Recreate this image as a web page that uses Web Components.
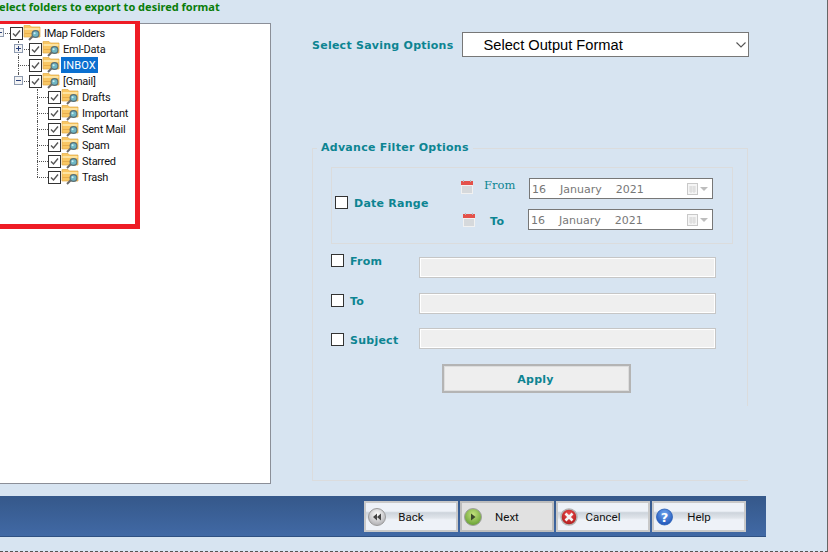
<!DOCTYPE html>
<html>
<head>
<meta charset="utf-8">
<title>Export wizard</title>
<style>
  html, body { margin: 0; padding: 0; background: #d7e4f1; }
</style>
</head>
<body>
<wiz-app></wiz-app>

<script>
const TEAL = "#0d8492";
const UI_FONT = "Roboto, 'Liberation Sans', sans-serif";
const BOLD_FONT = "'DejaVu Sans', Verdana, sans-serif";

class CheckBox extends HTMLElement {
  constructor() {
    super();
    this.attachShadow({ mode: "open" });
    let mark = this.hasAttribute("checked")
      ? '<path d="M3 6.5 L5.5 9 L10 3.5" fill="none" stroke="#555" stroke-width="1.4"/>'
      : "";
    this.shadowRoot.innerHTML = `
      <style>
        :host { display: block; width: 13px; height: 13px; flex: none; }
        svg { display: block; }
      </style>
      <svg width="13" height="13" viewBox="0 0 13 13">
        <rect x="0.5" y="0.5" width="12" height="12" fill="#fff" stroke="#333"/>
        ${mark}
      </svg>`;
  }
}
customElements.define("check-box", CheckBox);

class FolderIcon extends HTMLElement {
  constructor() {
    super();
    this.attachShadow({ mode: "open" });
    this.shadowRoot.innerHTML = `
      <style>
        :host { display: block; width: 18px; height: 16px; flex: none; }
        svg { display: block; }
      </style>
      <svg width="18" height="16" viewBox="0 0 18 16">
        <path d="M1 1.5 L1 0.5 L7 0.5 L8.5 2 L17 2 L17 12 L1 12 Z" fill="#f9c763" stroke="#e0ab48" stroke-width="0.7"/>
        <rect x="1.5" y="3" width="15" height="2" fill="#fde3a0"/>
        <rect x="1.5" y="8" width="8" height="1" fill="#e8ad4c"/>
        <path d="M10 11 L6 15" stroke="#6b6b6b" stroke-width="2"/>
        <circle cx="12.5" cy="9" r="3.4" fill="#6fb7c4" stroke="#5a7078" stroke-width="1.2"/>
        <circle cx="11.6" cy="8.2" r="1" fill="#cfeef2"/>
      </svg>`;
  }
}
customElements.define("folder-icon", FolderIcon);

class TreeNode extends HTMLElement {
  constructor() {
    super();
    this.attachShadow({ mode: "open" });
    let depth = Number(this.getAttribute("depth") || 0);
    let left = 10 + 19 * depth;
    let expander = this.getAttribute("expander");
    let sign = "";
    if (expander) {
      sign = `<span class="box"><i class="h"></i>${expander === "plus" ? '<i class="v"></i>' : ""}</span>`;
    }
    this.shadowRoot.innerHTML = `
      <style>
        :host { display: flex; height: 16px; align-items: center; position: relative; font: 11px ${UI_FONT}; letter-spacing: -0.25px; color: #111; }
        .gutter { width: ${left}px; height: 16px; flex: none; position: relative; }
        .hline { position: absolute; left: ${left - 11}px; width: 11px; top: 8px; border-top: 1px dotted #555; }
        .vline { position: absolute; left: ${left - 11}px; top: 0; height: ${this.hasAttribute("last") ? 8 : 16}px; border-left: 1px dotted #555; }
        .box { position: absolute; left: ${left - 15}px; top: 3px; width: 7px; height: 7px; padding: 0; border: 1px solid #8e9bb0; background: #f4f4f4; }
        .box i { position: absolute; background: #29407a; }
        .h { left: 1px; top: 3px; width: 5px; height: 1px; }
        .v { left: 3px; top: 1px; width: 1px; height: 5px; }
        .label { margin-left: 1px; padding: 0 2px; height: 16px; line-height: 17px; white-space: nowrap; }
        :host([selected]) .label { background: #0a6fd0; color: #fff; letter-spacing: 0.15px; }
      </style>
      <span class="gutter"><span class="vline"></span><span class="hline"></span>${sign}</span>
      <check-box checked></check-box>
      <folder-icon></folder-icon>
      <span class="label"><slot></slot></span>`;
  }
}
customElements.define("tree-node", TreeNode);

class TreePanel extends HTMLElement {
  constructor() {
    super();
    this.attachShadow({ mode: "open" });
    this.shadowRoot.innerHTML = `
      <style>
        :host { display: block; position: relative; height: 461px; box-sizing: border-box; background: #fff; border: 1px solid #8b8f98; border-left: none; padding-top: 1px; }
        .mark { position: absolute; left: -2px; top: -3px; width: 137px; height: 200px; border: solid #ee1c25; border-width: 3px 5px 5px 0; }
      </style>
      <slot></slot>
      <div class="mark"></div>`;
  }
}
customElements.define("tree-panel", TreePanel);

class OutputSelect extends HTMLElement {
  constructor() {
    super();
    this.attachShadow({ mode: "open" });
    this.shadowRoot.innerHTML = `
      <style>
        :host { display: flex; align-items: center; width: 287px; height: 25px; box-sizing: border-box; background: #fff; border: 1px solid #777; padding-left: 20px; font: 14.67px 'Liberation Sans', Arial, sans-serif; letter-spacing: 0; color: #000; }
        span { flex: 1; }
        svg { margin-right: 2px; }
      </style>
      <span><slot></slot></span>
      <svg width="10" height="6" viewBox="0 0 10 6"><path d="M0.5 0.5 L5 5 L9.5 0.5" fill="none" stroke="#555" stroke-width="1.1"/></svg>`;
  }
}
customElements.define("output-select", OutputSelect);

class CalendarIcon extends HTMLElement {
  constructor() {
    super();
    this.attachShadow({ mode: "open" });
    this.shadowRoot.innerHTML = `
      <style>
        :host { display: block; width: 12px; height: 14px; flex: none; }
        svg { display: block; }
      </style>
      <svg width="12" height="14" viewBox="0 0 12 14">
        <rect x="0" y="1" width="12" height="13" fill="#f1f1f1"/>
        <rect x="0" y="1" width="12" height="4" fill="#e4514a"/>
        <rect x="1" y="6" width="10" height="7" fill="#d6d9dc"/>
        <rect x="2" y="0" width="1" height="2" fill="#b9b9b9"/>
        <rect x="9" y="0" width="1" height="2" fill="#b9b9b9"/>
      </svg>`;
  }
}
customElements.define("calendar-icon", CalendarIcon);

class DatePicker extends HTMLElement {
  constructor() {
    super();
    this.attachShadow({ mode: "open" });
    this.shadowRoot.innerHTML = `
      <style>
        :host { display: flex; align-items: center; flex: 1; height: 21px; box-sizing: border-box; background: #fff; border: 1px solid #777; padding-left: 2px; font: 11px ${BOLD_FONT}; color: #777; }
        span { flex: 1; padding-top: 2px; word-spacing: 10.5px; white-space: nowrap; }
        svg { margin-right: 4px; }
      </style>
      <span><slot></slot></span>
      <svg width="21" height="12" viewBox="0 0 21 12">
        <rect x="0.5" y="0.5" width="10" height="11" fill="#f5f5f5" stroke="#c9c9c9"/>
        <path d="M2 4 H9 M2 6 H9 M2 8 H9 M4 3 V10 M7 3 V10" stroke="#d9d9d9" stroke-width="1"/>
        <path d="M13 4 H21 L17 8 Z" fill="#bdbdbd"/>
      </svg>`;
  }
}
customElements.define("date-picker", DatePicker);

class DateRow extends HTMLElement {
  constructor() {
    super();
    this.attachShadow({ mode: "open" });
    this.shadowRoot.innerHTML = `
      <style>
        :host { display: flex; align-items: center; height: 21px; color: ${TEAL}; }
        calendar-icon { margin-bottom: var(--icon-lift, 0); }
        .label { flex: none; white-space: nowrap; margin-bottom: var(--label-lift, 0); }
      </style>
      <calendar-icon></calendar-icon>
      <span class="label"><slot name="label"></slot></span>
      <slot></slot>`;
  }
}
customElements.define("date-row", DateRow);

class FilterRow extends HTMLElement {
  constructor() {
    super();
    this.attachShadow({ mode: "open" });
    this.shadowRoot.innerHTML = `
      <style>
        :host { display: grid; grid-template-columns: 13px 75px 297px; height: 21px; font: bold 11px ${BOLD_FONT}; letter-spacing: 0.25px; color: ${TEAL}; }
        check-box { margin-top: var(--shift); }
        .label { margin-top: var(--shift); margin-left: 6px; line-height: 15px; white-space: nowrap; }
        .input { box-sizing: border-box; height: 21px; background: #efefef; border: 1px solid #c6c6c6; box-shadow: inset 0 0 0 1px #fff; }
      </style>
      <check-box></check-box>
      <span class="label"><slot></slot></span>
      <div class="input"></div>`;
  }
}
customElements.define("filter-row", FilterRow);

class FilterPanel extends HTMLElement {
  constructor() {
    super();
    this.attachShadow({ mode: "open" });
    this.shadowRoot.innerHTML = `
      <style>
        :host { display: block; position: relative; width: 436px; height: 333px; box-sizing: border-box; border: 1px solid #dbdcdd; border-right: none; border-top: none; }
        .top { position: absolute; left: 0; right: 0; top: 0; border-top: 1px solid #dbdcdd; }
        .edge { position: absolute; right: 0; top: 0; height: 258px; border-right: 1px solid #dbdcdd; }
        .title { position: absolute; left: 4px; top: -7px; padding: 0 4px; height: 14px; background: #d7e4f1; font: bold 11px/14px ${BOLD_FONT}; letter-spacing: 0.27px; color: ${TEAL}; white-space: nowrap; }
        .body { padding: 19px 0 0 18px; }
        .group { display: flex; width: 402px; height: 77px; box-sizing: border-box; border: 1px solid #dbdcdd; }
        .range { width: 129px; flex: none; display: flex; align-items: flex-start; padding: 28px 0 0 3px; box-sizing: border-box; font: bold 11px/15px ${BOLD_FONT}; letter-spacing: 0.25px; color: ${TEAL}; }
        .range span { margin-left: 6px; white-space: nowrap; }
        .pickers { width: 252px; padding-top: 10px; display: flex; flex-direction: column; gap: 10px; }
        .from-label { display: inline-block; font: 11.5px 'DejaVu Serif', serif; margin: 0 14px 0 11px; width: 31px; }
        .to-label { display: inline-block; font: bold 11px ${BOLD_FONT}; letter-spacing: 0.4px; margin: 0 22px 0 15px; width: 16px; }
        .rows { margin-top: 13px; }
        .apply { margin: 15px 0 0 111px; }
        .shift { margin-left: 2px; }
      </style>
      <div class="top"></div>
      <div class="edge"></div>
      <div class="title">Advance Filter Options</div>
      <div class="body">
        <div class="group">
          <div class="range"><check-box></check-box><span>Date Range</span></div>
          <div class="pickers">
            <date-row style="--icon-lift:4px;--label-lift:10px">
              <span slot="label" class="from-label">From</span>
              <date-picker>16 January 2021</date-picker>
            </date-row>
            <date-row class="shift">
              <span slot="label" class="to-label">To</span>
              <date-picker>16 January 2021</date-picker>
            </date-row>
          </div>
        </div>
        <div class="rows">
          <filter-row style="--shift:-3px;margin-bottom:15px">From</filter-row>
          <filter-row style="--shift:1px;margin-bottom:14px">To</filter-row>
          <filter-row style="--shift:5px">Subject</filter-row>
        </div>
        <apply-button class="apply">Apply</apply-button>
      </div>`;
  }
}

class ApplyButton extends HTMLElement {
  constructor() {
    super();
    this.attachShadow({ mode: "open" });
    this.shadowRoot.innerHTML = `
      <style>
        :host { display: block; width: 189px; height: 29px; box-sizing: border-box; padding-right: 2px; background: #eee; border: 2px solid #b4b4b4; box-shadow: inset 0 0 0 1px #ddd; text-align: center; font: bold 11px/27px ${BOLD_FONT}; letter-spacing: 0.25px; color: ${TEAL}; }
      </style>
      <slot></slot>`;
  }
}
customElements.define("apply-button", ApplyButton);
customElements.define("filter-panel", FilterPanel);

const NAV_ICONS = {
  back: `<defs><radialGradient id="b" cx="50%" cy="35%" r="70%"><stop offset="0" stop-color="#fff"/><stop offset="1" stop-color="#a9a9ad"/></radialGradient></defs>
    <circle cx="9" cy="9" r="8.5" fill="url(#b)" stroke="#9a9a9a"/>
    <path d="M9 5.5 L5 9 L9 12.5 Z M13 5.5 L9 9 L13 12.5 Z" fill="#444"/>`,
  next: `<defs><radialGradient id="n" cx="50%" cy="35%" r="70%"><stop offset="0" stop-color="#c5e37f"/><stop offset="1" stop-color="#5f9a2c"/></radialGradient></defs>
    <circle cx="9" cy="9" r="8.5" fill="url(#n)" stroke="#a0a0a0"/>
    <path d="M7 5.5 L11.5 9 L7 12.5 Z" fill="#3d4a2c"/>`,
  cancel: `<defs><radialGradient id="c" cx="50%" cy="35%" r="70%"><stop offset="0" stop-color="#ee4a4a"/><stop offset="1" stop-color="#a81818"/></radialGradient></defs>
    <circle cx="9" cy="9" r="8" fill="url(#c)" stroke="#b3b3b3" stroke-width="1.5"/>
    <path d="M5.5 5.5 L12.5 12.5 M12.5 5.5 L5.5 12.5" stroke="#f4f4f4" stroke-width="2.6"/>`,
  help: `<defs><radialGradient id="h" cx="50%" cy="30%" r="75%"><stop offset="0" stop-color="#6fa5ee"/><stop offset="1" stop-color="#1a4fb5"/></radialGradient></defs>
    <circle cx="8.5" cy="9" r="8" fill="url(#h)" stroke="#2a5fb5" stroke-width="0.8"/>
    <text x="8.5" y="14" text-anchor="middle" font-family="'DejaVu Sans', sans-serif" font-weight="bold" font-size="13" fill="#fff">?</text>`,
};

class NavButton extends HTMLElement {
  constructor() {
    super();
    this.attachShadow({ mode: "open" });
    let icon = NAV_ICONS[this.getAttribute("icon")];
    this.shadowRoot.innerHTML = `
      <style>
        :host { display: grid; grid-template-columns: 1fr auto 1fr; align-items: center; width: 94px; height: 31px; box-sizing: border-box; padding: 0 2px; border: 2px solid #c9c9c9; font: 11.5px ${UI_FONT}; color: #111;
          background: linear-gradient(#eef2f8 0, #eef2f8 30%, #cdd4dc 36%, #dfe4ea 55%, #eef2f8 62%, #eef2f8 100%); }
        :host([hover]) { background: #e1e1e1; border-color: #bdbdbd; }
        svg { display: block; }
      </style>
      <svg width="18" height="18" viewBox="0 0 18 18">${icon}</svg>
      <span><slot></slot></span>
      <span></span>`;
  }
}
customElements.define("nav-button", NavButton);

class WizFooter extends HTMLElement {
  constructor() {
    super();
    this.attachShadow({ mode: "open" });
    this.shadowRoot.innerHTML = `
      <style>
        :host { display: flex; justify-content: flex-end; gap: 2px; width: 766px; height: 41px; box-sizing: border-box; padding: 5px 20px 0 0; background: linear-gradient(#35588a, #4169a5); border-bottom: 1px solid #2f5183; }
      </style>
      <slot></slot>`;
  }
}
customElements.define("wiz-footer", WizFooter);

class WizApp extends HTMLElement {
  constructor() {
    super();
    this.attachShadow({ mode: "open" });
    this.shadowRoot.innerHTML = `
      <style>
        :host { display: block; position: relative; width: 828px; height: 552px; box-sizing: border-box; overflow: hidden; background: #d7e4f1; border-right: 1px solid #666; border-bottom: 1px dashed #555; }
        .caption { height: 23px; margin-left: -7px; font: bold 11px/13px 'Noto Sans', sans-serif; color: #0a7d0a; white-space: nowrap; }
        .main { display: grid; grid-template-columns: 271px 1fr; height: 473px; }
        .side { padding-left: 41px; }
        .saving { display: flex; align-items: center; gap: 9px; margin-top: 9px; font: bold 11px ${BOLD_FONT}; letter-spacing: 0.25px; color: ${TEAL}; white-space: nowrap; }
        .saving span { padding-top: 2px; }
        filter-panel { margin-top: 91px; }
      </style>
      <div class="caption">Select folders to export to desired format</div>
      <div class="main">
        <tree-panel>
          <tree-node depth="0" expander="minus">IMap Folders</tree-node>
          <tree-node depth="1" expander="plus">Eml-Data</tree-node>
          <tree-node depth="1" selected>INBOX</tree-node>
          <tree-node depth="1" expander="minus" last>[Gmail]</tree-node>
          <tree-node depth="2">Drafts</tree-node>
          <tree-node depth="2">Important</tree-node>
          <tree-node depth="2">Sent Mail</tree-node>
          <tree-node depth="2">Spam</tree-node>
          <tree-node depth="2">Starred</tree-node>
          <tree-node depth="2" last>Trash</tree-node>
        </tree-panel>
        <div class="side">
          <div class="saving"><span>Select Saving Options</span><output-select>Select Output Format</output-select></div>
          <filter-panel></filter-panel>
        </div>
      </div>
      <wiz-footer>
        <nav-button icon="back">Back</nav-button>
        <nav-button icon="next" hover>Next</nav-button>
        <nav-button icon="cancel">Cancel</nav-button>
        <nav-button icon="help">Help</nav-button>
      </wiz-footer>`;
  }
}
customElements.define("wiz-app", WizApp);
</script>
</body>
</html>
